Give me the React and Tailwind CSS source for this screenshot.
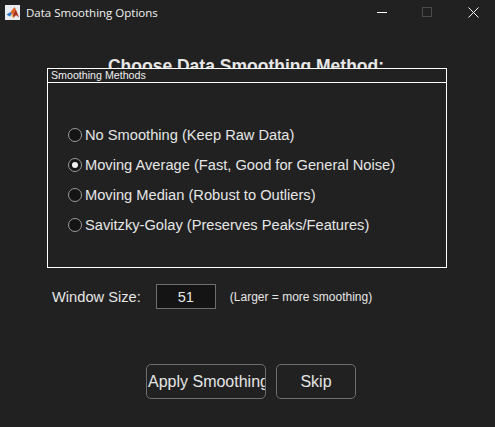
const methods = [
  { label: "No Smoothing (Keep Raw Data)" },
  { label: "Moving Average (Fast, Good for General Noise)", checked: true },
  { label: "Moving Median (Robust to Outliers)" },
  { label: "Savitzky-Golay (Preserves Peaks/Features)" },
];

const MatlabIcon = () => (
  <svg width="15" height="15" viewBox="0 0 15 15" className="shrink-0">
    <rect width="15" height="15" fill="#e9edf2" />
    <path d="M1.5 9.5 L5.5 7 L7 9 L4.5 11.5 Z" fill="#2f78c8" />
    <path d="M5.5 7 L9.5 2 L10.5 5 L8 10 L7 9 Z" fill="#e0641e" />
    <path d="M9.5 2 L11.5 6 L14 12.5 L11 10 L8.5 13 L8 10 L10.5 5 Z" fill="#a92f16" />
    <path d="M7 9 L8 10 L8.5 13 L6 11 Z" fill="#f0b040" />
  </svg>
);

const App = () => {
  return (
    <div className="w-[495px] h-[427px] bg-[#212121] text-white overflow-hidden font-['Liberation_Sans',sans-serif]">
      {/* title bar */}
      <div className="h-[24px] flex items-center pl-[5px]">
        <MatlabIcon />
        <span className="ml-[6px] mt-[2px] text-[11.5px] font-['Open_Sans',sans-serif] text-[#f2f2f2]">Data Smoothing Options</span>
        <div className="ml-auto flex items-center mr-[16px] gap-[35px]">
          <div className="w-[10px] h-px bg-white" />
          <div className="w-[10px] h-[10px] border border-[#4a4a4a]" />
          <svg width="11" height="11" viewBox="0 0 11 11" className="ml-[1px]">
            <path d="M0.5 0.5 L10.5 10.5 M10.5 0.5 L0.5 10.5" stroke="#f2f2f2" strokeWidth="1" />
          </svg>
        </div>
      </div>

      {/* heading, cut off by the panel */}
      <div className="h-[44px] overflow-hidden pt-[32px] pr-[3px] text-center text-[17.5px] leading-[21px] font-bold text-[#e6e6e6]">
        Choose Data Smoothing Method:
      </div>

      {/* smoothing methods panel */}
      <div className="ml-[47px] w-[400px] h-[200px] border border-white flex flex-col">
        <div className="h-[14px] border-b border-white pl-[3px] text-[10.67px] leading-[12px] text-[#eeeeee]">Smoothing Methods</div>
        <div className="flex flex-col pl-[20px] pt-[42px] gap-[10px]">
          {methods.map((m, i) => (
            <div key={i} className="h-[20px] flex items-center gap-[3px] text-[14.67px] text-[#e6e6e6]">
              <div className="w-[14px] h-[14px] rounded-full border border-[#9a9a9a] bg-[#141414] flex items-center justify-center">
                {m.checked && <div className="w-[6px] h-[6px] rounded-full bg-[#eeeeee]" />}
              </div>
              <span>{m.label}</span>
            </div>
          ))}
        </div>
      </div>

      {/* window size */}
      <div className="flex items-center mt-[16px] pl-[52px] h-[25px]">
        <span className="text-[14.67px] text-[#e6e6e6]">Window Size:</span>
        <div className="ml-[15px] w-[60px] h-[25px] bg-[#141414] border border-[#6e6e6e] flex items-center justify-center text-[14.67px] text-[#e6e6e6]">51</div>
        <span className="ml-[14px] text-[12px] text-[#e6e6e6]">(Larger = more smoothing)</span>
      </div>

      {/* buttons */}
      <div className="flex mt-[55px] ml-[146px] gap-[10px]">
        <button className="w-[120px] h-[35px] border border-[#6e6e6e] rounded-[5px] text-[16px] text-[#e6e6e6] overflow-hidden whitespace-nowrap pl-[1px] text-left">Apply Smoothing</button>
        <button className="w-[80px] h-[35px] border border-[#6e6e6e] rounded-[5px] text-[16px] text-[#e6e6e6]">Skip</button>
      </div>
    </div>
  );
};

export default App;
